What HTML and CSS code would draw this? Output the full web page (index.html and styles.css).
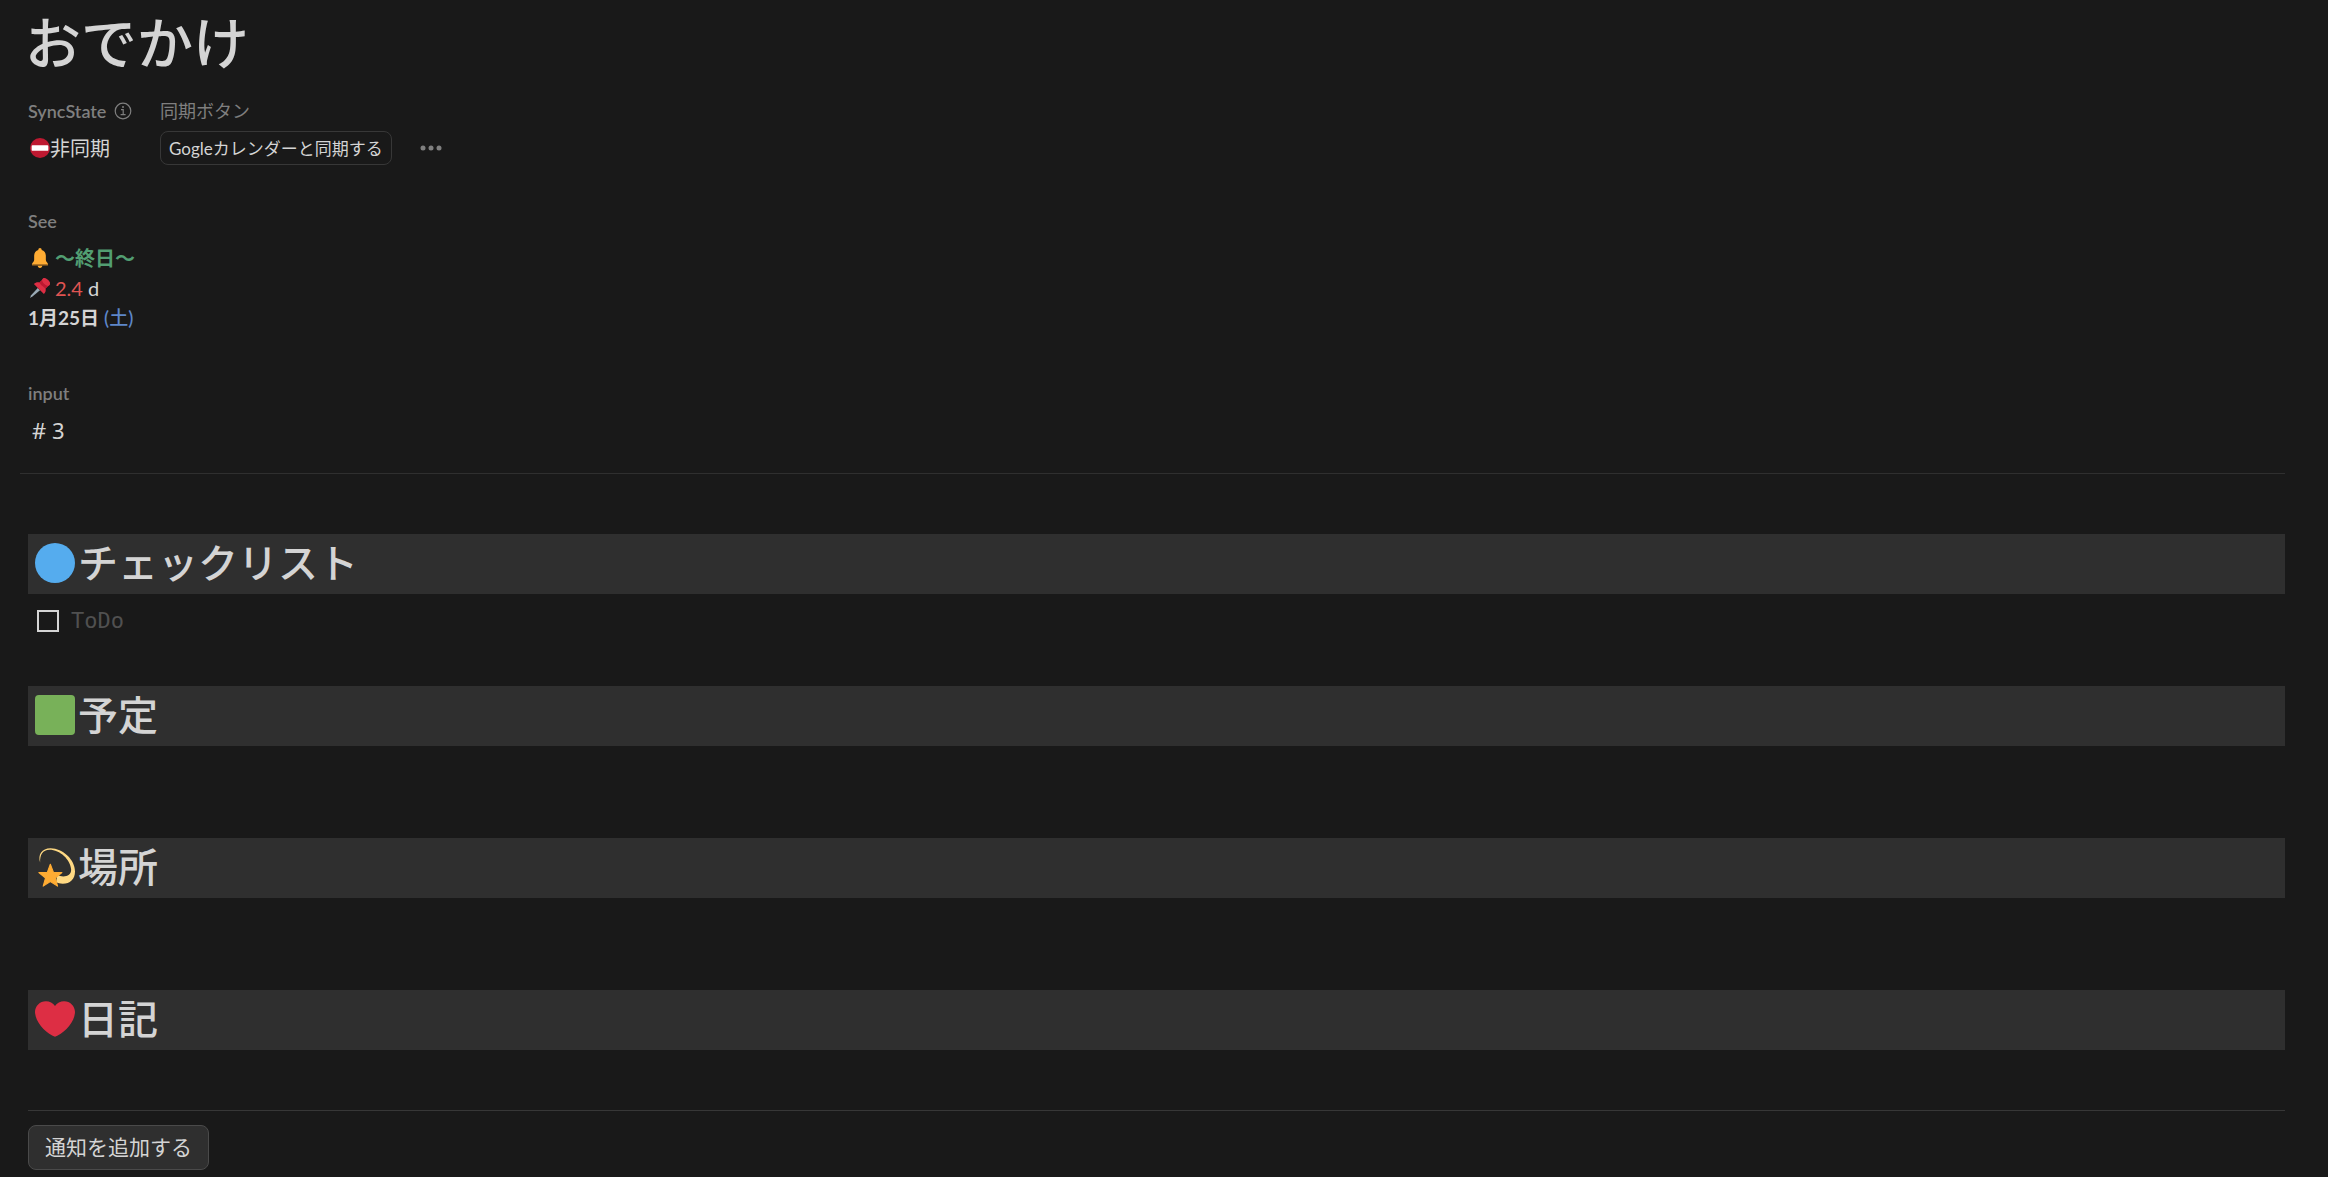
FILE: index.html
```html
<!DOCTYPE html>
<html lang="ja">
<head>
    <meta charset="UTF-8">
    <meta name="viewport" content="width=device-width, initial-scale=1.0">
    <title>おでかけ</title>
    <link rel="stylesheet" href="styles.css">
</head>
<body>
    <main class="page">
        <h1>おでかけ</h1>

        <div class="prop-row">
            <div class="prop sync-state">
                <div class="prop-label latin">SyncState
                    <svg class="info" viewBox="0 0 18 18" aria-hidden="true">
                        <circle cx="9" cy="9" r="7.8"/>
                        <path d="M7 7.6h2.2v4.8M6.6 12.6h5"/>
                        <circle class="dot" cx="9" cy="5" r="1"/>
                    </svg>
                </div>
                <div class="prop-value">
                    <svg class="emoji" viewBox="0 0 36 36" aria-hidden="true">
                        <circle cx="18" cy="18" r="18" fill="#be1931"/>
                        <rect x="3" y="13" width="30" height="10" rx="1.5" fill="#fff"/>
                    </svg>
                    <span>非同期</span>
                </div>
            </div>
            <div class="prop">
                <div class="prop-label">同期ボタン</div>
                <div class="prop-value">
                    <button type="button" class="sync-btn">Gogleカレンダーと同期する</button>
                    <button type="button" class="more-btn" aria-label="その他">
                        <svg viewBox="0 0 22 6" aria-hidden="true">
                            <circle cx="3" cy="3" r="2.5"/>
                            <circle cx="11" cy="3" r="2.5"/>
                            <circle cx="19" cy="3" r="2.5"/>
                        </svg>
                    </button>
                </div>
            </div>
        </div>

        <div class="prop see">
            <div class="prop-label latin">See</div>
            <div class="line">
                <svg class="emoji" viewBox="0 0 36 36" aria-hidden="true">
                    <path fill="#ffac33" d="M18 0c1.700 0 3 1.300 3 3v.6c4.600 1.400 7.500 5.300 7.500 10.400v7.500c0 3.500 4 4.500 4 8.500v1H3.500v-1c0-4 4-5 4-8.500V14c0-5.100 2.900-9 7.500-10.400V3c0-1.700 1.300-3 3-3z"/>
                    <path fill="#7a501b" d="M4 29.500h28v2H4z"/>
                    <path fill="#ffac33" d="M14 32h8c0 2.400-1.600 4-4 4s-4-1.600-4-4z"/>
                </svg>
                <strong class="green">～終日～</strong>
            </div>
            <div class="line">
                <svg class="emoji" viewBox="0 0 36 36" aria-hidden="true">
                    <path fill="#99aab5" d="M0 36l2-5 12-13 4 4L5 33z"/>
                    <path fill="#dd2e44" d="M7 11c3-3 6-4 10-3l5-5c1-2 2-3 4-3 3 0 10 7 10 10 0 2-1 3-3 4l-5 5c1 4 0 7-3 10z"/>
                    <path fill="#be1931" d="M17 8l5-4 3 6 8 4-5 5c-2-1-3-2-5-4-3-2-4-4-6-7z"/>
                    <path fill="#dd2e44" d="M22 3c0 5 6 11 11 11 4-2 4-6 0-10s-9-5-11-1z"/>
                </svg>
                <span class="red">2.4</span> <span>d</span>
            </div>
            <div class="line date"><strong>1月25日</strong> <span class="blue">(土)</span></div>
        </div>

        <div class="prop input-prop">
            <div class="prop-label latin">input</div>
            <div class="line number"># 3</div>
        </div>

        <hr class="wide">

        <div class="sections">
            <section>
                <h2>
                    <svg viewBox="0 0 36 36" aria-hidden="true">
                        <circle cx="18" cy="18" r="18" fill="#55acee"/>
                    </svg>
                    <span>チェックリスト</span>
                </h2>
                <label class="todo"><input type="checkbox"> <span>ToDo</span></label>
            </section>
            <section>
                <h2>
                    <svg viewBox="0 0 36 36" aria-hidden="true">
                        <rect width="36" height="36" rx="3.500" fill="#78b159"/>
                    </svg>
                    <span>予定</span>
                </h2>
            </section>
            <section>
                <h2>
                    <svg viewBox="0 0 36 36" aria-hidden="true">
                        <path fill="#ffd983" d="M4.600 14C2.500 7 6 1.200 14 1.200c11 0 22 10.300 22 20.800 0 7-4.500 11-11 11-2.500 0-4.500-.5-6-1.500l1-6.500c5 3 13 1.500 12.500-5C32 11.500 22.500 2.500 13 2.500 7 2.500 4.300 7 4.600 14z"/>
                        <path fill="#ffac33" stroke="#ffac33" stroke-linejoin="round" d="M13.800 15.500l2.800 7.300 7.600.3-6 4.800 2.100 7.300-6.500-4.200-6.400 4.200 2.100-7.300-6-4.800 7.600-.3z"/>
                    </svg>
                    <span>場所</span>
                </h2>
            </section>
            <section>
                <h2>
                    <svg viewBox="0 0 36 36" aria-hidden="true">
                        <path fill="#dd2e44" d="M36 11.800c0-5.400-4.400-9.800-9.800-9.800-3.400 0-6.400 1.700-8.200 4.400C16.200 3.700 13.200 2 9.800 2 4.400 2 0 6.400 0 11.800c0 .8.1 1.500.3 2.200C1.700 23 11.200 31.500 18 34c6.800-2.500 16.300-11 17.700-20 .2-.7.3-1.500.3-2.200z"/>
                    </svg>
                    <span>日記</span>
                </h2>
            </section>
        </div>

        <hr>

        <button type="button" class="notify-btn">通知を追加する</button>
    </main>
</body>
</html>
```

FILE: styles.css
```css
body {
    margin: 0;
    background-color: #191919;
    color: #d4d4d4;
    font-family: Lato, "Noto Sans CJK JP", sans-serif;
    font-size: 20px;
    line-height: 30px;
}
button {
    font-family: inherit;
    color: inherit;
    cursor: pointer;
}
.page {
    padding: 4px 43px 7px 28px;
}
h1 {
    margin: 0 0 0 -3px;
    font-family: "Noto Sans CJK JP", sans-serif;
    font-size: 56px;
    font-weight: 500;
    line-height: 72px;
}
.prop-row {
    display: flex;
    margin-top: 23px;
}
.prop-label {
    display: flex;
    align-items: center;
    gap: 8px;
    color: #7f7f7f;
    font-size: 18px;
    line-height: 24px;
}
.latin {
    font-weight: 600;
}
.sync-state {
    width: 132px;
}
.info {
    width: 18px;
    height: 18px;
    fill: none;
    stroke: #7f7f7f;
    stroke-width: 1.2;
}
.info .dot {
    fill: #7f7f7f;
    stroke: none;
}
.prop-value {
    display: flex;
    align-items: center;
    height: 34px;
    margin-top: 8px;
}
.emoji {
    width: 20px;
    height: 20px;
    margin-left: 2px;
    flex-shrink: 0;
}
.sync-btn {
    height: 34px;
    padding: 0 8px 2px;
    background: none;
    border: 1px solid #373737;
    border-radius: 8px;
    font-size: 17px;
}
.more-btn {
    display: flex;
    margin-left: 22px;
    padding: 6px;
    background: none;
    border: none;
}
.more-btn svg {
    width: 22px;
    height: 6px;
    fill: #7f7f7f;
}
.see {
    margin-top: 44px;
}
.input-prop {
    margin-top: 48px;
}
.line {
    display: flex;
    align-items: center;
    gap: 5px;
}
.prop-label + .line {
    margin-top: 10px;
}
.date {
    font-size: 19px;
}
.green {
    color: #529e72;
    font-weight: 700;
}
.red {
    color: #df5452;
}
.blue {
    color: #5e87c9;
    font-weight: 500;
}
.number {
    padding-left: 4px;
    font-family: "Noto Sans", sans-serif;
    font-size: 22px;
}
hr {
    margin: 0;
    border: none;
    border-top: 1px solid #373737;
}
.wide {
    margin: 28px 0 60px -8px;
    border-color: #2f2f2f;
}
.sections {
    display: grid;
    gap: 32px;
}
section {
    min-height: 120px;
}
h2 {
    display: flex;
    align-items: center;
    gap: 3px;
    height: 60px;
    margin: 0;
    padding: 0 0 3px 7px;
    box-sizing: border-box;
    background-color: #2f2f2f;
    font-family: "Noto Sans CJK JP", sans-serif;
    font-size: 40px;
    font-weight: 500;
}
h2 svg {
    width: 40px;
    height: 40px;
}
h2 span {
    padding-bottom: 3px;
}
.todo {
    display: flex;
    align-items: center;
    gap: 12px;
    margin-top: 12px;
    padding-left: 9px;
    color: #505050;
    font-family: "DejaVu Sans Mono", monospace;
    font-size: 22px;
}
.todo input {
    appearance: none;
    width: 22px;
    height: 22px;
    margin: 0;
    border: 2px solid #d4d4d4;
}
.notify-btn {
    display: block;
    height: 45px;
    margin-top: 14px;
    padding: 0 16px 4px;
    background-color: #2f2f2f;
    border: 1px solid #4a4a4a;
    border-radius: 8px;
    font-size: 21px;
}
```
